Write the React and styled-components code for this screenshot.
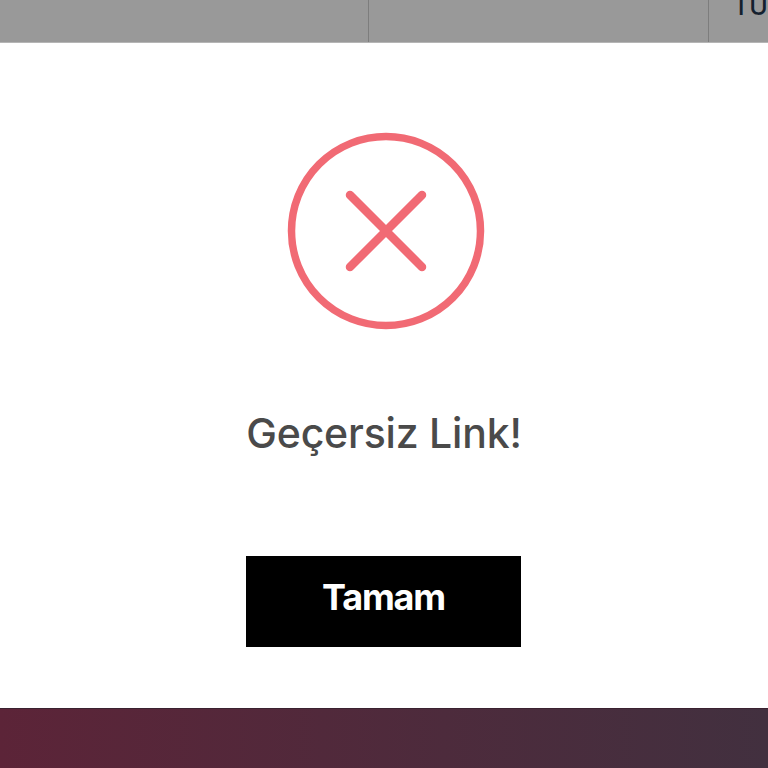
import React from 'react'
import styled, { createGlobalStyle } from 'styled-components'

const GlobalStyle = createGlobalStyle`
  html, body {
    margin: 0;
    padding: 0;
    background: #fff;
  }
`

const Page = styled.div`
  width: 768px;
  height: 768px;
  display: flex;
  flex-direction: column;
  overflow: hidden;
  font-family: Inter, "Liberation Sans", sans-serif;
`

const TopBar = styled.div`
  height: 43px;
  flex: none;
  display: grid;
  grid-template-columns: 369px 340px 59px;
  background: #999999;
  border-bottom: 1px solid #b5b5b5;
  box-sizing: border-box;
`

const Cell = styled.div`
  display: flex;
  align-items: flex-end;
  overflow: hidden;
  box-sizing: border-box;
  padding: 0 0 25px 24px;
  border-right: ${(p) => (p.$last ? 'none' : '1px solid #7d7d7d')};
  color: #14202e;
  font-size: 25px;
  font-weight: 500;
  line-height: 22px;
  white-space: nowrap;
`

const Dialog = styled.div`
  flex: 1;
  display: flex;
  flex-direction: column;
  align-items: center;
  padding-top: 89px;
  background: #fff;
`

const Icon = styled.svg`
  width: 198px;
  height: 198px;
  display: block;
  margin-left: 3px;
`

const Message = styled.div`
  margin-top: 80px;
  width: 276px;
  text-align: center;
  font-size: 41px;
  line-height: 46px;
  font-weight: 500;
  letter-spacing: -0.2px;
  color: #4a4a4a;
  white-space: nowrap;
`

const Button = styled.button`
  width: 275px;
  height: 91px;
  margin: 100px 1px 0 0;
  padding: 0 0 10px;
  border: none;
  border-radius: 0;
  background: #000;
  color: #fff;
  font-family: inherit;
  font-size: 36px;
  font-weight: 700;
  letter-spacing: -1.2px;
  cursor: pointer;
`

const Footer = styled.div`
  height: 60px;
  flex: none;
  background: linear-gradient(90deg, #5c2438 0%, #42303f 100%);
  border-top: 1px solid #3a2230;
  box-sizing: border-box;
`

const App = () => {
  return (
    <Page>
      <GlobalStyle />
      <TopBar>
        <Cell />
        <Cell />
        <Cell $last>TUR</Cell>
      </TopBar>
      <Dialog>
        <Icon viewBox="0 0 198 198" fill="none" stroke="#f16a74" strokeWidth="7.5" strokeLinecap="round">
          <circle cx="99" cy="99" r="94.5" />
          <path strokeWidth="8.5" d="M63 63 L135 135 M135 63 L63 135" />
        </Icon>
        <Message>Geçersiz Link!</Message>
        <Button>Tamam</Button>
      </Dialog>
      <Footer />
    </Page>
  )
}

export default App
